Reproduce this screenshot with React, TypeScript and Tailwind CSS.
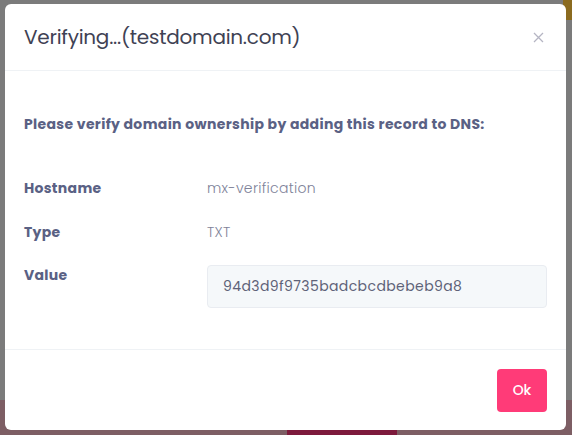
import React from "react";

export default function App() {
  const font = { fontFamily: "Poppins, Inter, 'Open Sans', sans-serif" };
  return (
    <div className="relative w-[572px] h-[435px] overflow-hidden bg-[#7b7b7b]" style={font}>
      {/* background page */}
      <div className="flex flex-col h-full">
        <div className="flex-1 flex justify-end">
          <div className="w-[9px] h-[20px] bg-[#8b6b1f]" />
        </div>
        <div className="h-[35px] bg-[#7d5e64] flex justify-center pt-[24px]">
          <div className="w-[110px] h-[20px] ml-[112px] bg-[#7d1a3c] rounded-sm" />
        </div>
      </div>

      {/* modal */}
      <div className="absolute left-[5px] top-[4px] w-[561px] h-[426px] bg-white rounded-[6px] flex flex-col">
        <div className="h-[67px] shrink-0 flex items-center justify-between pl-[19px] pr-[22px] border-b border-[#eff2f5]">
          <h2 className="text-[20px] text-[#3f4254] font-normal tracking-[-0.25px]">Verifying...(testdomain.com)</h2>
          <svg width="11" height="11" viewBox="0 0 11 11" className="text-[#b5b5c3]">
            <path d="M1 1 L10 10 M10 1 L1 10" stroke="currentColor" strokeWidth="1.3" />
          </svg>
        </div>
        <div className="flex-1 px-[19px] pt-[43px]">
          <p className="text-[14px] font-bold tracking-[0.34px] text-[#5a6184]">
            Please verify domain ownership by adding this record to DNS:
          </p>
          <div className="mt-[43px] grid grid-cols-[183px_1fr] gap-y-[23px] items-start text-[14px]">
            <div className="font-bold tracking-[0.3px] text-[#5a6184] leading-[21px]">Hostname</div>
            <div className="font-light tracking-[0.3px] text-[#7e8299] leading-[21px]">mx-verification</div>
            <div className="font-bold tracking-[0.3px] text-[#5a6184] leading-[21px]">Type</div>
            <div className="font-light tracking-[0.3px] text-[#7e8299] leading-[21px]">TXT</div>
            <div className="font-bold tracking-[0.3px] text-[#5a6184] leading-[21px] -mt-[1px]">Value</div>
            <div className="-mt-[1px] h-[43px] flex items-center px-[15px] bg-[#f5f8fa] border border-[#e9ecf1] rounded-[4px] text-[#5e6278] tracking-[0.4px]">
              94d3d9f9735badcbcdbebeb9a8
            </div>
          </div>
        </div>
        <div className="h-[81px] shrink-0 border-t border-[#eff2f5] flex items-center justify-end px-[19px]">
          <button className="w-[50px] h-[43px] rounded-[4px] bg-[#ff3b78] text-white text-[14px] font-medium">
            Ok
          </button>
        </div>
      </div>
    </div>
  );
}
